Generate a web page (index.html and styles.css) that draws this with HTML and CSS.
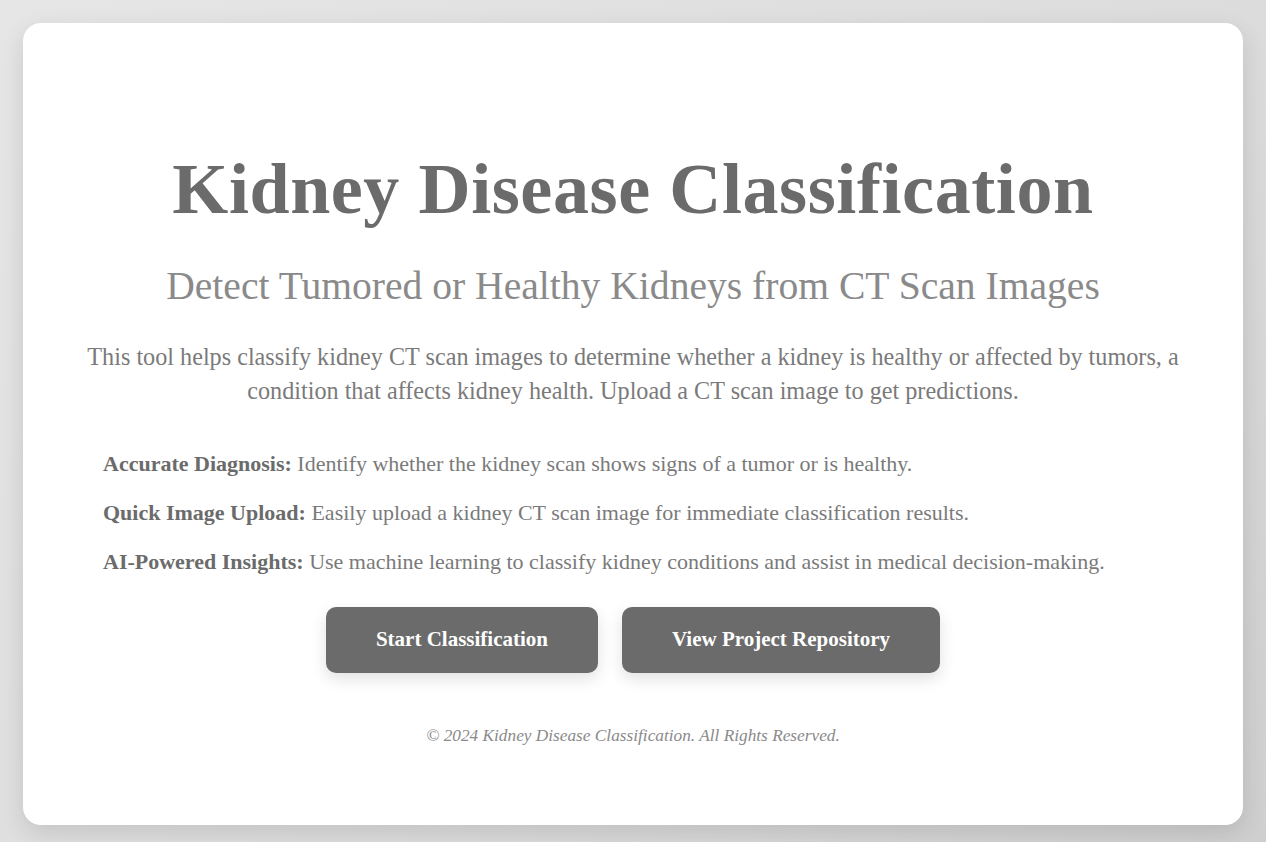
FILE: index.html
```html
<!DOCTYPE html>
<html lang="en">
<head>
<meta charset="utf-8">
<title>Kidney Disease Classification</title>
<link rel="stylesheet" href="styles.css">
</head>
<body>
<main class="card">
  <h1 class="title">Kidney Disease Classification</h1>
  <h2 class="subtitle">Detect Tumored or Healthy Kidneys from CT Scan Images</h2>
  <p class="intro">This tool helps classify kidney CT scan images to determine whether a kidney is healthy or affected by tumors, a condition that affects kidney health. Upload a CT scan image to get predictions.</p>
  <ul class="features">
    <li><strong>Accurate Diagnosis:</strong> Identify whether the kidney scan shows signs of a tumor or is healthy.</li>
    <li><strong>Quick Image Upload:</strong> Easily upload a kidney CT scan image for immediate classification results.</li>
    <li><strong>AI-Powered Insights:</strong> Use machine learning to classify kidney conditions and assist in medical decision-making.</li>
  </ul>
  <div class="actions">
    <a class="btn" href="#">Start Classification</a>
    <a class="btn" href="#">View Project Repository</a>
  </div>
  <footer class="footer">© 2024 Kidney Disease Classification. All Rights Reserved.</footer>
</main>
</body>
</html>
```
FILE: styles.css
```css
html, body {
  margin: 0;
  height: 100%;
}
body {
  background: linear-gradient(135deg, #e6e6e6 0%, #dcdcdc 60%, #cfcfcf 100%);
  font-family: "Liberation Serif", "DejaVu Serif", serif;
  color: #777;
  padding: 23px;
  box-sizing: border-box;
}
.card {
  background: #fff;
  border-radius: 18px;
  box-shadow: 0 8px 24px rgba(0,0,0,0.12);
  height: 802px;
  box-sizing: border-box;
  padding: 123px 40px 0;
  text-align: center;
}
.title {
  margin: 0;
  font-size: 72px;
  font-weight: 700;
  color: #6b6b6b;
  line-height: 1.2;
  letter-spacing: 0.6px;
}
.subtitle {
  margin: 31px 0 0;
  font-size: 39.6px;
  font-weight: 400;
  color: #8a8a8a;
  line-height: 1.2;
}
.intro {
  margin: 29px 0 0;
  font-size: 24.2px;
  line-height: 34px;
  color: #7a7a7a;
}
.features {
  list-style: none;
  margin: 41px 0 0;
  padding: 0 40px;
  text-align: left;
  font-size: 22px;
  color: #7a7a7a;
}
.features li {
  line-height: 29px;
  margin-bottom: 20px;
}
.features strong {
  color: #6b6b6b;
}
.actions {
  display: flex;
  justify-content: center;
  gap: 24px;
  margin-top: 31px;
}
.btn {
  display: inline-flex;
  align-items: center;
  justify-content: center;
  height: 66px;
  padding: 0 50px;
  background: #6b6b6b;
  color: #fff;
  font-size: 21px;
  font-weight: 700;
  text-decoration: none;
  border-radius: 10px;
  box-shadow: 0 6px 16px rgba(0,0,0,0.12);
}
.footer {
  margin-top: 53px;
  font-size: 17.3px;
  font-style: italic;
  color: #8a8a8a;
}
```
